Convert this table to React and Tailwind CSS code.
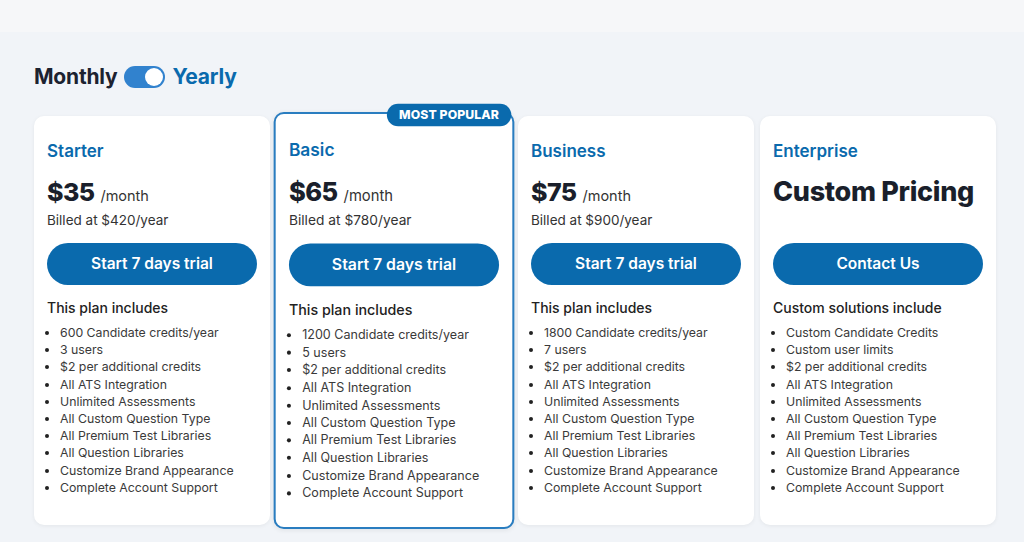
import { useState } from "react";

const plans = [
  {
    name: "Starter",
    price: "$35",
    billed: "Billed at $420/year",
    cta: "Start 7 days trial",
    heading: "This plan includes",
    features: [
      "600 Candidate credits/year",
      "3 users",
      "$2 per additional credits",
      "All ATS Integration",
      "Unlimited Assessments",
      "All Custom Question Type",
      "All Premium Test Libraries",
      "All Question Libraries",
      "Customize Brand Appearance",
      "Complete Account Support",
    ],
  },
  {
    name: "Basic",
    price: "$65",
    billed: "Billed at $780/year",
    cta: "Start 7 days trial",
    heading: "This plan includes",
    popular: true,
    features: [
      "1200 Candidate credits/year",
      "5 users",
      "$2 per additional credits",
      "All ATS Integration",
      "Unlimited Assessments",
      "All Custom Question Type",
      "All Premium Test Libraries",
      "All Question Libraries",
      "Customize Brand Appearance",
      "Complete Account Support",
    ],
  },
  {
    name: "Business",
    price: "$75",
    billed: "Billed at $900/year",
    cta: "Start 7 days trial",
    heading: "This plan includes",
    features: [
      "1800 Candidate credits/year",
      "7 users",
      "$2 per additional credits",
      "All ATS Integration",
      "Unlimited Assessments",
      "All Custom Question Type",
      "All Premium Test Libraries",
      "All Question Libraries",
      "Customize Brand Appearance",
      "Complete Account Support",
    ],
  },
  {
    name: "Enterprise",
    custom: true,
    cta: "Contact Us",
    heading: "Custom solutions include",
    features: [
      "Custom Candidate Credits",
      "Custom user limits",
      "$2 per additional credits",
      "All ATS Integration",
      "Unlimited Assessments",
      "All Custom Question Type",
      "All Premium Test Libraries",
      "All Question Libraries",
      "Customize Brand Appearance",
      "Complete Account Support",
    ],
  },
];

export default function App() {
  const [yearly, setYearly] = useState(true);

  return (
    <div
      className="min-h-[542px] bg-[#f1f4f8] text-[#1c2230]"
      style={{ fontFamily: "Inter, 'Noto Sans', sans-serif" }}
    >
      <div className="h-[32px] bg-[#f6f7f9]" />
      <div className="pl-[34px]">
        <div className="flex items-center h-[24px] mt-[33px] gap-[7px]">
          <span className="text-[21px] font-bold tracking-[-0.2px]">Monthly</span>
          <button
            type="button"
            onClick={() => setYearly(!yearly)}
            className={`relative w-[41px] h-[22px] rounded-full bg-[#3182ce] flex items-center px-[2px] ${
              yearly ? "justify-end" : "justify-start"
            }`}
          >
            <span className="block w-[18px] h-[18px] rounded-full bg-white" />
          </button>
          <span className="text-[21px] font-bold text-[#0a6aad] tracking-[-0.2px]">
            Yearly
          </span>
        </div>

        <div className="grid grid-cols-[repeat(4,236px)] gap-[6px] mt-[27px]">
          {plans.map((plan) => (
            <PlanCard key={plan.name} plan={plan} />
          ))}
        </div>
      </div>
    </div>
  );
}

const PlanCard = ({ plan }) => {
  return (
    <div
      className={`relative h-[409px] rounded-[10px] bg-white border-2 shadow-[0_1px_4px_rgba(0,0,0,0.06)] ${
        plan.popular
          ? "border-[#2a7dc0] scale-[1.02] pt-[24px] px-[13px]"
          : "border-white pt-[22px] px-[11px]"
      }`}
    >
      {plan.popular && (
        <span className="absolute -top-[10px] right-[1px] h-[22px] px-[12px] rounded-full bg-[#0a6aad] text-white text-[12px] font-extrabold leading-[22px] tracking-[0.1px]">
          MOST POPULAR
        </span>
      )}
      <h3 className="text-[17px] leading-[22px] font-semibold text-[#0a6aad]">
        {plan.name}
      </h3>
      <div className="h-[56px] mt-[12px]">
        {plan.custom ? (
          <div className="text-[27px] leading-[36px] font-extrabold tracking-[-0.3px] text-[#1a1f2b]">
            Custom Pricing
          </div>
        ) : (
          <>
            <div className="flex items-baseline gap-[6px] h-[36px]">
              <span className="text-[25px] leading-[36px] font-extrabold tracking-[-0.6px] text-[#1a1f2b]">
                {plan.price}
              </span>
              <span className="text-[14.5px] text-[#333]">/month</span>
            </div>
            <div className="text-[13.5px] leading-[20px] text-[#333]">
              {plan.billed}
            </div>
          </>
        )}
      </div>
      <button
        type="button"
        className="mt-[13px] w-full h-[42px] rounded-full bg-[#0a6aad] text-white text-[15.5px] font-semibold"
      >
        {plan.cta}
      </button>
      <div className="mt-[12px] text-[14px] leading-[22px] font-medium text-[#222]">
        {plan.heading}
      </div>
      <ul className="mt-[5px] list-disc pl-[13px] text-[12.3px] leading-[17.2px] text-[#3a3a3a] marker:text-[#222]">
        {plan.features.map((f, i) => (
          <li key={i}>{f}</li>
        ))}
      </ul>
    </div>
  );
};
